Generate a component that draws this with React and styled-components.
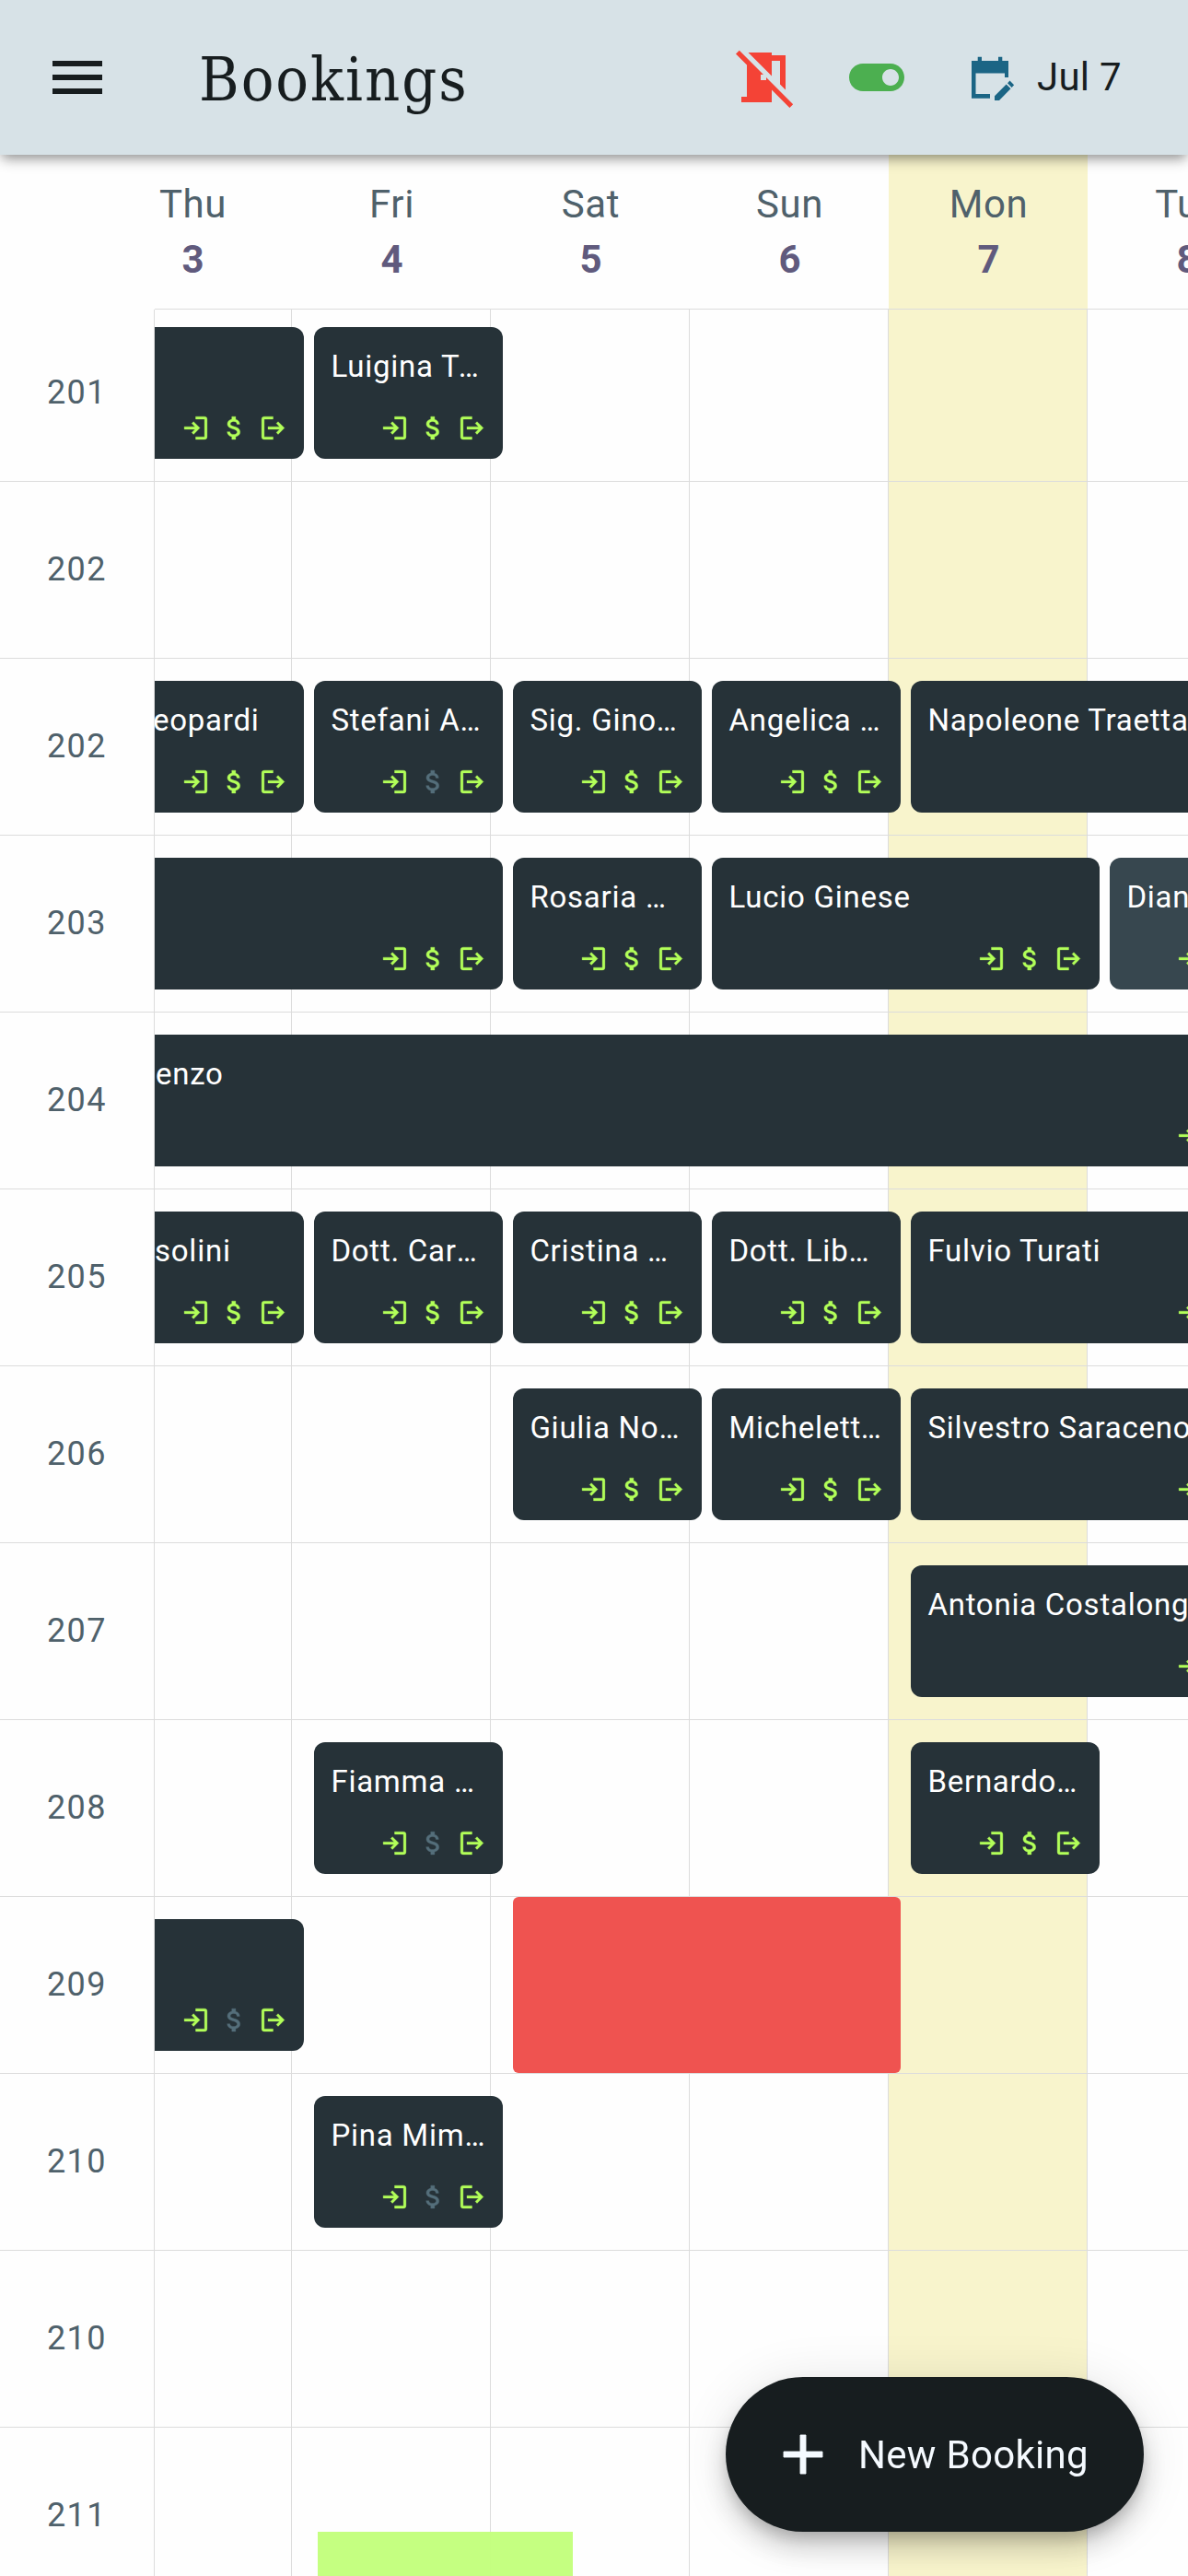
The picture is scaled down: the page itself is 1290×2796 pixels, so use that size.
import React from 'react';
import styled, { createGlobalStyle } from 'styled-components';
import {
  MdAdd,
  MdAttachMoney,
  MdMenu,
  MdNoMeetingRoom,
  MdToggleOn,
} from 'react-icons/md';

const GlobalStyle = createGlobalStyle`
  * {
    box-sizing: border-box;
  }

  body {
    margin: 0;
    background: #fefefe;
    font-family: Roboto, 'Liberation Sans', sans-serif;
  }

  svg {
    display: block;
    flex-shrink: 0;
  }
`;

const Screen = styled.div`
  width: 1290px;
  height: 2796px;
  display: flex;
  flex-direction: column;
  overflow: hidden;
`;

const AppBar = styled.header`
  height: 168px;
  flex-shrink: 0;
  display: flex;
  align-items: center;
  padding: 0 72px 0 48px;
  background: #d7e2e7;
  color: #171d1f;
  box-shadow: 0 6px 12px -3px rgba(0, 0, 0, 0.36), 0 5px 16px rgba(0, 0, 0, 0.14);
  position: relative;
  z-index: 3;
`;

const Title = styled.h1`
  flex: 1;
  margin: 0 0 0 96px;
  padding-top: 6px;
  font-family: 'DejaVu Serif Condensed', 'DejaVu Serif', serif;
  font-stretch: condensed;
  font-weight: 400;
  font-size: 66px;
  line-height: 84px;
  letter-spacing: 2px;
`;

const BarActions = styled.div`
  display: flex;
  align-items: center;
`;

const BarIcon = styled.span`
  display: flex;
  color: ${props => props.$color};
  font-size: ${props => props.$size}px;
  margin-right: ${props => props.$gap}px;
`;

const DateLabel = styled.span`
  font-size: 42px;
  line-height: 60px;
  letter-spacing: 0.3px;
`;

const DayHeader = styled.div`
  height: 168px;
  flex-shrink: 0;
  display: flex;
  padding-left: 168px;
  background: #fefefe;
  position: relative;
  z-index: 2;
`;

const DayTrack = styled.div`
  flex: 1;
  overflow: hidden;
  border-bottom: 1px solid #dcdcdc;
`;

/* timeline is scrolled partway through the first day */
const DayTrackInner = styled.div`
  display: flex;
  width: 1296px;
  height: 100%;
  margin-left: -67px;
`;

const Day = styled.div`
  width: 216px;
  flex-shrink: 0;
  display: flex;
  flex-direction: column;
  align-items: center;
  padding: 24px 0 0 1px;
  background: ${props => (props.$today ? '#f8f4cc' : 'transparent')};
`;

const Weekday = styled.span`
  font-size: 42px;
  line-height: 60px;
  letter-spacing: 0.6px;
  color: #4f616b;
`;

const DayNumber = styled.span`
  font-size: 42px;
  line-height: 60px;
  font-weight: 700;
  color: #605a7d;
`;

const Rows = styled.main`
  margin-top: -5px;
`;

const Row = styled.div`
  height: 192px;
  display: flex;
  border-bottom: 1px solid #dcdcdc;
`;

const RoomLabel = styled.div`
  width: 168px;
  flex-shrink: 0;
  display: flex;
  align-items: center;
  justify-content: center;
  padding-bottom: 2px;
  border-right: 1px solid #dcdcdc;
  font-size: 36px;
  letter-spacing: 1.5px;
  color: #4f616b;
`;

const Lane = styled.div`
  flex: 1;
  overflow: hidden;
`;

const LaneGrid = styled.div`
  height: 191px;
  margin-left: -67px;
  width: 1728px;
  display: grid;
  grid-template-columns: repeat(8, 216px);
  grid-template-rows: 191px;
`;

const Cell = styled.div`
  grid-row: 1;
  grid-column: ${props => props.$col};
  border-right: 1px solid #dcdcdc;
  background: ${props => (props.$today ? '#f8f4cc' : 'transparent')};
`;

const Card = styled.div`
  grid-row: 1;
  grid-column: ${props => props.$start} / span ${props => props.$span};
  height: 142.6px;
  margin: 24px -12.5px 0 ${props => (props.$cut ? 67 : 24.4)}px;
  padding: 19px 18px 17px ${props => (props.$cut ? 0 : 18)}px;
  border-radius: ${props => (props.$cut ? '0 12px 12px 0' : '12px')};
  background: ${props => (props.$upcoming ? '#37474f' : '#263238')};
  display: flex;
  flex-direction: column;
  justify-content: space-between;
  min-width: 0;
  z-index: 1;
`;

const Guest = styled.div`
  height: 48px;
  font-size: 33px;
  line-height: 48px;
  letter-spacing: 0.75px;
  text-indent: ${props => props.$shift || 0}px;
  color: #fff;
  white-space: nowrap;
  overflow: hidden;
  text-overflow: ellipsis;
`;

const Status = styled.div`
  display: flex;
  justify-content: flex-end;
  gap: 9px;
  margin-right: -1px;
  font-size: 33px;
`;

const StatusIcon = styled.span`
  display: flex;
  color: ${props => (props.$done ? '#b2ff59' : '#546e7a')};

  path:not([fill='none']) {
    stroke: currentColor;
    stroke-width: 0.25;
  }
`;

const Blocked = styled.div`
  grid-row: 1;
  grid-column: ${props => props.$start} / span ${props => props.$span};
  margin: 0 -12.5px 0 24.4px;
  border-radius: 6px;
  background: #ef5350;
  z-index: 1;
`;

const Highlight = styled.div`
  grid-row: 1;
  grid-column: ${props => props.$start} / span 2;
  width: 277px;
  margin: 113px 0 0 28px;
  background: rgba(195, 255, 125, 0.97);
  z-index: 1;
`;

const NewBooking = styled.button`
  position: fixed;
  right: 48px;
  bottom: 48px;
  width: 454px;
  height: 168px;
  display: flex;
  align-items: center;
  gap: 24px;
  padding: 0 0 0 48px;
  border: 0;
  border-radius: 84px;
  background: #171d1f;
  color: #f5faff;
  font-family: inherit;
  font-size: 42px;
  font-weight: 400;
  letter-spacing: 0.3px;
  white-space: nowrap;
  box-shadow: 0 9px 15px -3px rgba(0, 0, 0, 0.18), 0 18px 30px rgba(0, 0, 0, 0.16),
    0 3px 54px rgba(0, 0, 0, 0.1);
  z-index: 4;

  path:not([fill='none']) {
    stroke: currentColor;
    stroke-width: 0.3;
  }
`;

const CheckInIcon = () => (
  <svg width="1em" height="1em" viewBox="0 0 24 24" fill="currentColor">
    <path d="M12 21v-2h7V5h-7V3h7q2 0 2 2v14q0 2-2 2z" />
    <path d="M10.3 17l-1.4-1.45L11.45 13H3v-2h8.45L8.9 8.45 10.3 7l5 5z" />
  </svg>
);

const CheckOutIcon = () => (
  <svg width="1em" height="1em" viewBox="0 0 24 24" fill="currentColor">
    <path d="M5 21q-2 0-2-2V5q0-2 2-2h7v2H5v14h7v2z" />
    <path d="M16 17l-1.4-1.45L17.15 13H8v-2h9.15L14.6 8.45 16 7l5 5z" />
  </svg>
);

const EditDateIcon = () => (
  <svg width="1em" height="1em" viewBox="8 7 54 54" fill="currentColor">
    <path d="M15 16h6.7v-4.3H26V16h18v-4.3h4.3V16H55v18h-4v-4.5H19.5V52H35v4.7H15z" />
    <path d="M40 59v-4.8l12.7-12.7 4.8 4.8L45 59zM54 40.2l2.5-2.6 4.6 4.7-2.5 2.7z" />
  </svg>
);

const days = [
  { name: 'Thu', date: 3 },
  { name: 'Fri', date: 4 },
  { name: 'Sat', date: 5 },
  { name: 'Sun', date: 6 },
  { name: 'Mon', date: 7, today: true },
  { name: 'Tue', date: 8 },
];

// day = first visible night, cut = the stay began before the visible range
const rooms = [
  { room: '201', items: [{ day: 3, cut: true }, { day: 4, guest: 'Luigina Tomasini' }] },
  { room: '202', items: [] },
  {
    room: '202',
    items: [
      { day: 3, cut: true, guest: 'eopardi', shift: -2 },
      { day: 4, guest: 'Stefani Aldo', unpaid: true },
      { day: 5, guest: 'Sig. Gino Rossi' },
      { day: 6, guest: 'Angelica Rossi' },
      { day: 7, nights: 3, guest: 'Napoleone Traetta' },
    ],
  },
  {
    room: '203',
    items: [
      { day: 3, nights: 2, cut: true },
      { day: 5, guest: 'Rosaria Rossi' },
      { day: 6, nights: 2, guest: 'Lucio Ginese' },
      { day: 8, guest: 'Diana', upcoming: true },
    ],
  },
  { room: '204', items: [{ day: 3, nights: 6, cut: true, guest: 'enzo', shift: 1 }] },
  {
    room: '205',
    items: [
      { day: 3, cut: true, guest: 'solini' },
      { day: 4, guest: 'Dott. Carmelo Rossi' },
      { day: 5, guest: 'Cristina Rossi' },
      { day: 6, guest: 'Dott. Libero Rossi' },
      { day: 7, nights: 2, guest: 'Fulvio Turati' },
    ],
  },
  {
    room: '206',
    items: [
      { day: 5, guest: 'Giulia Nossi' },
      { day: 6, guest: 'Micheletto Rossi' },
      { day: 7, nights: 2, guest: 'Silvestro Saraceno' },
    ],
  },
  { room: '207', items: [{ day: 7, nights: 2, guest: 'Antonia Costalonga' }] },
  {
    room: '208',
    items: [
      { day: 4, guest: 'Fiamma Rossi', unpaid: true },
      { day: 7, guest: 'Bernardo Rossi' },
    ],
  },
  {
    room: '209',
    items: [
      { day: 3, cut: true, unpaid: true },
      { day: 5, nights: 2, blocked: true },
    ],
  },
  { room: '210', items: [{ day: 4, guest: 'Pina Mimmo', unpaid: true }] },
  { room: '210', items: [] },
  { room: '211', items: [{ day: 4, highlight: true }] },
];

function Booking({ day, nights = 1, cut, guest, shift, unpaid, upcoming }) {
  return (
    <Card $start={day - 2} $span={nights} $cut={cut} $upcoming={upcoming}>
      <Guest $shift={shift}>{guest}</Guest>
      <Status>
        <StatusIcon $done><CheckInIcon /></StatusIcon>
        <StatusIcon $done={!unpaid}><MdAttachMoney /></StatusIcon>
        <StatusIcon $done><CheckOutIcon /></StatusIcon>
      </Status>
    </Card>
  );
}

function LaneItem(props) {
  if (props.blocked) return <Blocked $start={props.day - 2} $span={props.nights} />;
  if (props.highlight) return <Highlight $start={props.day - 2} />;
  return <Booking {...props} />;
}

function App() {
  return (
    <Screen>
      <GlobalStyle />
      <AppBar>
        <MdMenu size={72} />
        <Title>Bookings</Title>
        <BarActions>
          <BarIcon $color="#f44336" $size={72} $gap={48}><MdNoMeetingRoom /></BarIcon>
          <BarIcon $color="#4caf50" $size={72} $gap={60}><MdToggleOn /></BarIcon>
          <BarIcon $color="#1b6585" $size={54} $gap={24}><EditDateIcon /></BarIcon>
          <DateLabel>Jul 7</DateLabel>
        </BarActions>
      </AppBar>
      <DayHeader>
        <DayTrack>
          <DayTrackInner>
            {days.map(d => (
              <Day key={d.date} $today={d.today}>
                <Weekday>{d.name}</Weekday>
                <DayNumber>{d.date}</DayNumber>
              </Day>
            ))}
          </DayTrackInner>
        </DayTrack>
      </DayHeader>
      <Rows>
        {rooms.map(({ room, items }, index) => (
          <Row key={index}>
            <RoomLabel>{room}</RoomLabel>
            <Lane>
              <LaneGrid>
                {days.map((d, i) => (
                  <Cell key={d.date} $col={i + 1} $today={d.today} />
                ))}
                {items.map(item => (
                  <LaneItem key={item.day} {...item} />
                ))}
              </LaneGrid>
            </Lane>
          </Row>
        ))}
      </Rows>
      <NewBooking>
        <MdAdd size={72} />
        New Booking
      </NewBooking>
    </Screen>
  );
}

export default App;
